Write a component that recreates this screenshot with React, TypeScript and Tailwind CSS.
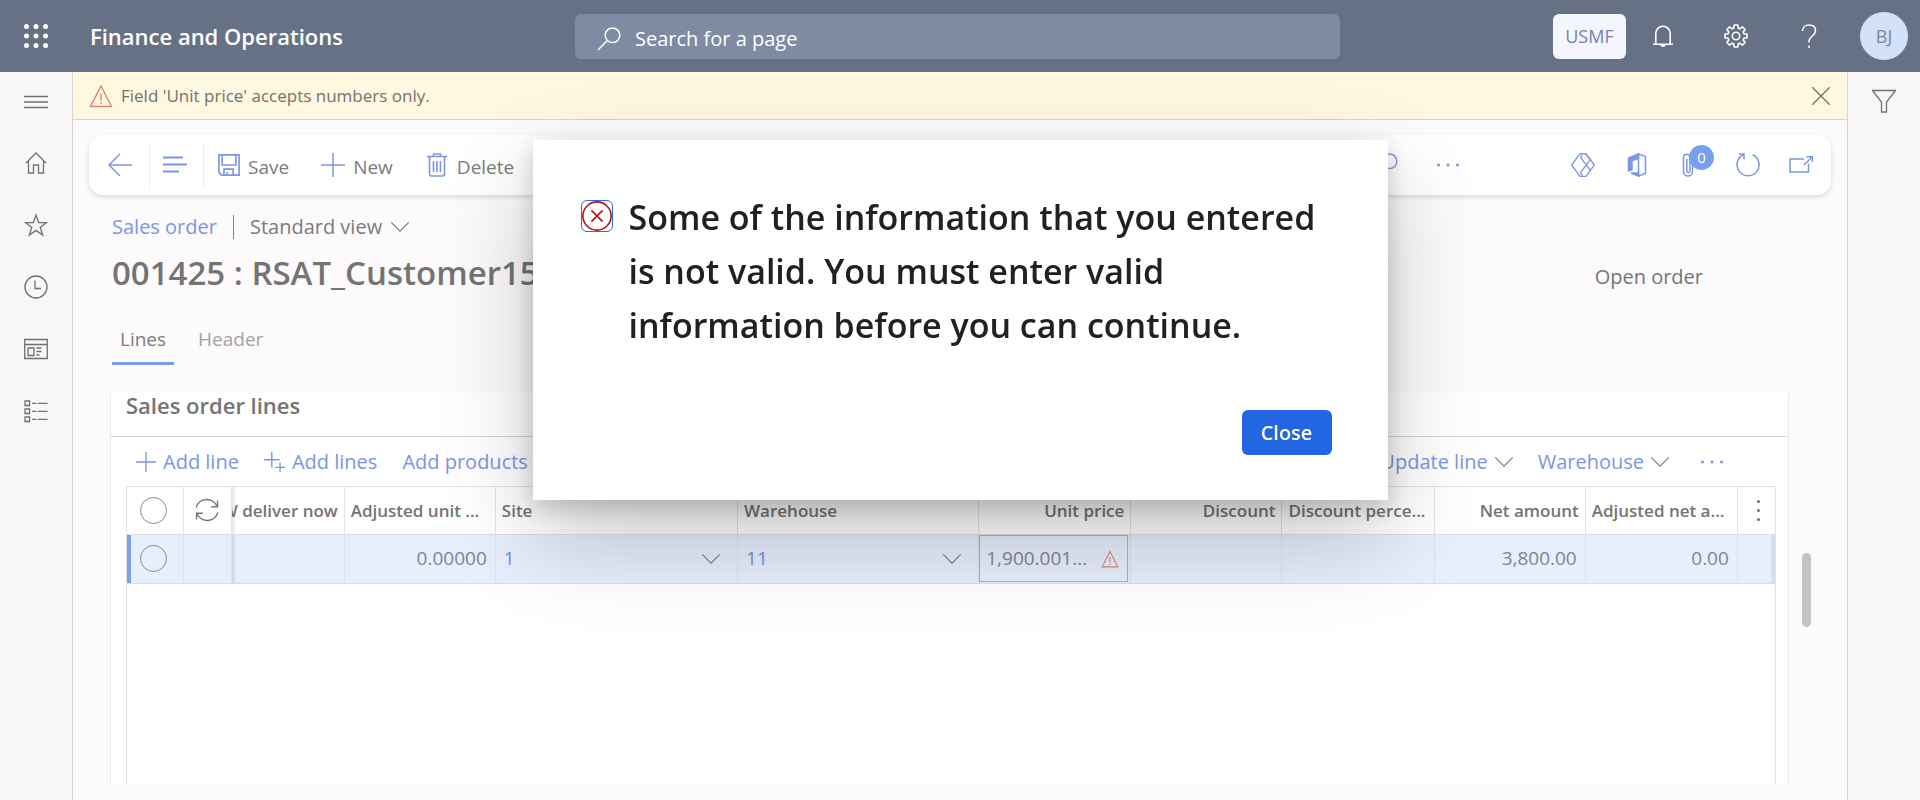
import React from "react";

type IconProps = { className?: string; size?: string; children: React.ReactNode; weight?: number };

function Icon({ className = "", size = "size-6", weight = 1.3, children }: IconProps) {
  return (
    <svg
      viewBox="0 0 24 24"
      className={`${size} shrink-0 ${className}`}
      fill="none"
      stroke="currentColor"
      strokeWidth={weight}
      aria-hidden="true"
    >
      {children}
    </svg>
  );
}

const Chevron = () => (
  <Icon size="size-5" className="text-[#7c7b7a]">
    <path d="M1.5 6.5 12 17 22.5 6.5" />
  </Icon>
);

const Warning = ({ size }: { size: string }) => (
  <Icon size={size} className="text-[#dc8570]" weight={1.4}>
    <path d="M12 2 22.5 22.5H1.5Z" />
    <path d="M12 9.5v7M12 18.3v1.7" />
  </Icon>
);

const Magnifier = () => (
  <Icon weight={1.5}>
    <circle cx="15.500" cy="8.300" r="7.300" />
    <path d="M10.200 13.500 1 23" />
  </Icon>
);

const Dots = () => (
  <Icon>
    <g fill="currentColor" stroke="none">
      <circle cx="2.500" cy="12" r="1.500" />
      <circle cx="12" cy="12" r="1.500" />
      <circle cx="21.500" cy="12" r="1.500" />
    </g>
  </Icon>
);

function Rail() {
  const items = [
    {
      label: "Home",
      art: <path d="M2 12 12 2l10 10M4.500 9.500v12.500h5v-8h5v8h5V9.500" />,
    },
    {
      label: "Favorites",
      art: <path d="m12 2 2.600 7.600h8l-6.400 4.800 2.500 7.700L12 17.400l-6.700 4.700 2.500-7.700L1.400 9.600h8Z" />,
    },
    {
      label: "Recent",
      art: (
        <>
          <circle cx="12" cy="12" r="11" />
          <path d="M11 5.500v8h6" />
        </>
      ),
    },
    {
      label: "Workspaces",
      art: <path d="M.700 2.500h22.600v19H.700ZM.700 7.500h22.600M4 11h6v7.500H4ZM12.500 11h5M12.500 14.500h5M12.500 18h3" />,
    },
    {
      label: "Modules",
      art: <path d="M1 2h4.500v4.500H1ZM1 10h4.500v4.500H1ZM1 18h4.500v4.500H1ZM8 4.300h4.500M14 4.300h9.500M8 12.300h4.500M14 12.300h9.500M8 20.300h4.500M14 20.300h9.500" />,
    },
  ];
  return (
    <nav className="flex w-[73px] shrink-0 flex-col border-r border-[#d6d4d4] bg-[#f8f6f7] text-[#727170]">
      <button aria-label="Expand navigation" className="flex h-[60px] items-center justify-center">
        <Icon>
          <path d="M0 6.500h24M0 12h24M0 17.500h24" />
        </Icon>
      </button>
      {items.map((i) => (
        <a key={i.label} href="#" aria-label={i.label} className="flex h-[62px] items-center justify-center">
          <Icon>{i.art}</Icon>
        </a>
      ))}
    </nav>
  );
}

function Header() {
  return (
    <header className="grid h-[72px] shrink-0 grid-cols-[575fr_765fr_580fr] items-center bg-[#677186] text-white">
      <div className="flex items-center">
        <button aria-label="Apps" className="flex w-[72px] justify-center">
          <svg viewBox="0 0 24 24" className="size-6" fill="currentColor" aria-hidden="true">
            {[2.5, 12, 21.5].map((y) => [2.5, 12, 21.5].map((x) => <circle key={`${x}-${y}`} cx={x} cy={y} r="2.500" />))}
          </svg>
        </button>
        <h1 className="pl-[18px] text-[22px] font-semibold">Finance and Operations</h1>
      </div>
      <label className="flex h-[45px] items-center gap-[14px] rounded-md bg-[#7e8ba3] pl-[22px] pt-1.5">
        <Magnifier />
        <input
          aria-label="Search for a page"
          placeholder="Search for a page"
          className="min-w-0 flex-1 bg-transparent text-[20px] text-white outline-none placeholder:text-white"
        />
      </label>
      <div className="flex items-center justify-end pr-3">
        <button className="h-[45px] w-[73px] rounded-md bg-[#f3f6fe] text-[18px] text-[#7384a8]">USMF</button>
        <button aria-label="Notifications" className="flex w-[73px] justify-center">
          <Icon weight={1.6}>
            <path d="M4.800 20v-10.500a7.200 7.200 0 0 1 14.400 0V20M2 20.300h20M9.800 20.500a2.300 2.300 0 0 0 4.400 0" />
          </Icon>
        </button>
        <button aria-label="Settings" className="flex w-[73px] justify-center">
          <Icon weight={1.6}>
            <circle cx="12" cy="12" r="3.700" />
            <path d="m10.200 1h3.600l.500 3.100 1.700.700 2.500-1.900 2.600 2.600-1.900 2.500.700 1.700 3.100.500v3.600l-3.100.500-.700 1.700 1.900 2.500-2.600 2.600-2.500-1.900-1.700.700-.500 3.100h-3.600l-.500-3.100-1.700-.700-2.500 1.900-2.600-2.600 1.900-2.500-.700-1.700L1 13.800v-3.600l3.100-.500.700-1.700-1.900-2.500 2.600-2.600L8 4.800l1.700-.700Z" />
          </Icon>
        </button>
        <button aria-label="Help" className="flex w-[73px] justify-center">
          <Icon weight={1.5}>
            <path d="M5.500 7c0-3.500 2.500-6 6.500-6s6.500 2.300 6.500 5.700c0 5.300-6.500 5.300-6.500 10.800v1M12 21.500v2.500" />
          </Icon>
        </button>
        <button className="ml-[15px] size-12 rounded-full bg-[#d3e1f9] text-[18px] text-[#7f8796]">BJ</button>
      </div>
    </header>
  );
}

function Toolbar() {
  return (
    <div className="mx-4 mt-[15px] flex h-[60px] items-center rounded-[14px] bg-white text-[19px] text-[#7c7b7a] shadow-[0_2px_5px_rgba(0,0,0,0.14)]">
      <button aria-label="Back" className="flex h-[46px] w-[61px] items-center justify-center border-r border-[#f0eeee] pl-0.5 text-[#7d95e4]">
        <Icon weight={1.500}>
          <path d="M24 12H1M12 1 1 12l11 11" />
        </Icon>
      </button>
      <button aria-label="Menu" className="flex h-[46px] w-[54px] items-center justify-center border-r border-[#f0eeee] pr-1 text-[#7d95e4]">
        <Icon weight={1.800}>
          <path d="M0 4.500h20M0 11.500h24M0 18.500h16" />
        </Icon>
      </button>
      <button className="flex items-center gap-2 pl-[14px]">
        <Icon size="size-[22px]" weight={1.800} className="text-[#7d95e4]">
          <path d="M1 1h22v22H4l-3-3ZM4.500 1v11h15V1M6.500 23v-6.500h10V23M10 23v-3.500" />
        </Icon>
        <span className="pt-1">Save</span>
      </button>
      <button className="flex items-center gap-2 pl-8">
        <Icon className="text-[#7d95e4]" weight={1.500}>
          <path d="M12 0v24M0 12h24" />
        </Icon>
        <span className="pt-1">New</span>
      </button>
      <button className="flex items-center gap-2 pl-8">
        <Icon className="text-[#7d95e4]" weight={1.600}>
          <path d="M2 3.500h20M8.500 3V1h7v2M4.500 3.500V21q0 2 2 2h11q2 0 2-2V3.500M8.500 8v11M12 8v11M15.500 8v11" />
        </Icon>
        <span className="pt-1">Delete</span>
      </button>
      <div className="ml-auto flex items-center text-[#7d95e4]">
        <button aria-label="Search actions" className="mr-[38px]">
          <Magnifier />
        </button>
        <button aria-label="More" className="mr-[96px]">
          <Dots />
        </button>
        <button aria-label="Power Apps" className="flex w-[53px] justify-center">
          <Icon weight={1.300}>
            <path d="M9 .700h6L23.300 12 15 23.300H9L.700 12Z" />
            <path d="M11.500 1 9.500 4.500 19.500 17.500M14.500 1 19.500 6.500 9.500 19.500 11.500 23" />
          </Icon>
        </button>
        <button aria-label="Office" className="flex w-[56px] justify-center">
          <Icon weight={1.500}>
            <path d="M13.500 1 20.500 3.500v17L13.500 23Z" />
            <path d="M13.500 1 3.500 5v13l3.500-1.200V7.500l6.500-2ZM6 20l7.500 3V20Z" fill="currentColor" />
          </Icon>
        </button>
        <button aria-label="Attachments" className="relative flex w-[56px] justify-center">
          <Icon weight={1.500} className="-translate-x-1">
            <path d="M15.500 5v13.500a4.500 4.500 0 0 1-9 0V4.500a3 3 0 0 1 6.500 0v13.500a1.500 1.500 0 0 1-3.200 0V6" />
          </Icon>
          <span className="absolute -top-2 left-6 flex size-[25px] items-center justify-center rounded-full bg-[#779fee] text-[15px] leading-none text-white">
            0
          </span>
        </button>
        <button aria-label="Refresh" className="flex w-[53px] justify-center">
          <Icon weight={1.500}>
            <path d="M16.500 1.700a11 11 0 1 1-9.500.300M3 1h5v5.500" />
          </Icon>
        </button>
        <button aria-label="Open in new window" className="mr-[3px] flex w-[54px] justify-center">
          <Icon weight={1.500}>
            <path d="M15 6H1v13h18.500v-8.500M15 12 23 4M17.500 3.700h5.800V9" />
          </Icon>
        </button>
      </div>
    </div>
  );
}

const columns = [
  { text: "Adjusted unit ...", width: "w-[151px]", align: "text-left" },
  { text: "Site", width: "w-[242px]", align: "text-left" },
  { text: "Warehouse", width: "w-[241px]", align: "text-left" },
  { text: "Unit price", width: "w-[152px]", align: "text-right" },
  { text: "Discount", width: "w-[151px]", align: "text-right" },
  { text: "Discount perce...", width: "w-[152px]", align: "text-left" },
  { text: "Net amount", width: "w-[151px]", align: "text-right" },
  { text: "Adjusted net a...", width: "w-[152px]", align: "text-left" },
];

function Lookup({ label, value }: { label: string; value: string }) {
  return (
    <div className="flex items-center pl-2 pr-4">
      <input aria-label={label} defaultValue={value} className="min-w-0 flex-1 bg-transparent text-[#7191dc] outline-none" />
      <button aria-label={`Open ${label}`}>
        <Chevron />
      </button>
    </div>
  );
}

function Grid() {
  const radio = "block size-[27px] mx-auto appearance-none rounded-full border border-[#8a8988]";
  return (
    <div className="ml-[15px] mr-3 flex flex-1 flex-col border-x border-t border-[#e2e1e1]">
      <table className="w-full table-fixed border-collapse text-[#757473]">
        <thead>
          <tr className="h-[47px] border-b border-[#dfdfe0] text-[17px]">
            <th className="w-[56px] border-r border-[#e6e5e5] p-0 pr-0.5">
              <input type="radio" name="all" aria-label="Select all rows" className={radio} />
            </th>
            <th className="w-[48px] border-r border-[#e6e5e5] p-0">
              <button aria-label="Refresh rows" className="mx-auto block">
                <Icon weight={1.400}>
                  <path d="M1.200 9.500a11 11 0 0 1 20.800-1M22.500 2.500v6.300h-6.300M22.800 14.500a11 11 0 0 1-20.800 1M1.500 21.500v-6.300h6.300" />
                </Icon>
              </button>
            </th>
            <th className="w-[113px] overflow-hidden border-r border-[#e6e5e5] p-0 font-semibold shadow-[inset_4px_0_3px_-2px_rgba(0,0,0,0.12)]">
              <span className="flex justify-end whitespace-nowrap pr-1.5">W deliver now</span>
            </th>
            {columns.map((c) => (
              <th key={c.text} className={`${c.width} ${c.align} overflow-hidden whitespace-nowrap border-r border-[#e2e2e2] px-1.5 py-0 font-semibold`}>
                {c.text}
              </th>
            ))}
            <th className="w-[37px] p-0">
              <button aria-label="Grid options" className="mx-auto flex flex-col gap-1.5 pl-1">
                <span className="size-[3px] rounded-full bg-[#6f6e6d]" />
                <span className="size-[3px] rounded-full bg-[#6f6e6d]" />
                <span className="size-[3px] rounded-full bg-[#6f6e6d]" />
              </button>
            </th>
          </tr>
        </thead>
        <tbody>
          <tr className="h-[49px] border-b border-[#d9dde6] bg-[#e7eefc] text-[19px] text-[#82858c] [&>td]:border-r [&>td]:border-[#dce2ee] [&>td]:py-0 [&>td]:pl-0">
            <td className="pr-0.5 shadow-[inset_4px_0_0_#7ca0e4]">
              <input type="radio" name="row" aria-label="Select row" className={radio} />
            </td>
            <td />
            <td className="shadow-[inset_4px_0_3px_-2px_rgba(0,0,0,0.12)]" />
            <td className="pr-2 text-right">0.00000</td>
            <td className="pr-0"><Lookup label="Site" value="1" /></td>
            <td className="pr-0"><Lookup label="Warehouse" value="11" /></td>
            <td className="pr-0">
              <div className="mr-0.5 flex h-[47px] items-center border border-[#d3a985] pl-1.5 pr-2">
                <input aria-label="Unit price" defaultValue="1,900.001..." className="min-w-0 flex-1 bg-transparent outline-none" />
                <Warning size="size-[18px]" />
              </div>
            </td>
            <td />
            <td />
            <td className="pr-2 text-right">3,800.00</td>
            <td className="pr-2 text-right">0.00</td>
            <td className="shadow-[inset_-3px_0_2px_-1px_rgba(120,150,210,0.25)]" />
          </tr>
        </tbody>
      </table>
    </div>
  );
}

function Lines() {
  return (
    <div className="flex flex-1 items-start gap-[13px] pb-4 pl-[37px] pr-9">
      <section className="flex min-w-0 flex-1 flex-col self-stretch border-x border-[#ebe9ea] bg-white">
        <h3 className="h-11 shrink-0 border-b border-[#d8d6d6] pl-[15px] text-[22px] font-semibold leading-6 text-[#757473]">Sales order lines</h3>
        <div className="flex h-[49px] shrink-0 items-center gap-[25px] px-6 text-[20px] text-[#7d95e4]">
          <button className="flex items-center gap-1.5">
            <Icon size="size-[22px]" weight={1.500}><path d="M12 1v22M1 12h22" /></Icon>
            Add line
          </button>
          <button className="flex items-center gap-1.5">
            <Icon size="size-[22px]" weight={1.500}><path d="M8.500 1v17M0 9.500h17M17.500 12.500V23M12 17.800h11" /></Icon>
            Add lines
          </button>
          <button>Add products</button>
          <div className="ml-auto mr-10 flex items-center">
            <button className="flex items-center gap-1.5">Update line <Chevron /></button>
            <button className="ml-6 flex items-center gap-1.5">Warehouse <Chevron /></button>
            <button aria-label="More line actions" className="ml-[30px]"><Dots /></button>
          </div>
        </div>
        <Grid />
      </section>
      <div className="mt-40 h-[74px] w-[9px] shrink-0 rounded-full bg-[#c5c3c4]" />
    </div>
  );
}

function ErrorDialog() {
  return (
    <div className="fixed inset-0 flex items-start justify-center pt-[140px]">
      <div
        role="alertdialog"
        aria-labelledby="dialog-text"
        className="w-[855px] bg-white pb-[45px] pl-12 pr-14 pt-[50px] shadow-[0_38px_86px_rgba(0,0,0,0.22),0_7px_22px_rgba(0,0,0,0.18)]"
      >
        <div className="flex items-start gap-4">
          <span className="mt-2.5 flex size-8 shrink-0 items-center justify-center rounded-md border border-[#2f6be0]">
            <Icon size="size-[30px]" className="text-[#b3141d]">
              <circle cx="12" cy="12" r="11.300" />
              <path d="m7.500 7.500 9 9M16.500 7.500l-9 9" />
            </Icon>
          </span>
          <p id="dialog-text" className="text-[34px] font-semibold leading-[54px] text-[#222120]">
            Some of the information that you entered
            <br />
            is not valid. You must enter valid
            <br />
            information before you can continue.
          </p>
        </div>
        <div className="mt-[58px] flex justify-end">
          <button className="h-[45px] w-[90px] rounded-md bg-[#2266e3] text-[20px] font-semibold text-white">Close</button>
        </div>
      </div>
    </div>
  );
}

export default function App() {
  return (
    <div className="flex min-h-screen flex-col bg-[#fcfafb] font-['Open_Sans','Noto_Sans',sans-serif]">
      <Header />
      <div className="flex flex-1">
        <Rail />
        <main className="flex min-w-0 flex-1 flex-col">
          <div role="alert" className="flex h-12 items-center gap-2 border-b border-[#d8d4cc] bg-[#fff8e0] pl-4 pr-4">
            <Warning size="size-6" />
            <span className="flex-1 text-[17px] text-[#73716a]">Field 'Unit price' accepts numbers only.</span>
            <button aria-label="Dismiss" className="text-[#73716a]">
              <Icon size="size-5" weight={1.600}><path d="m1.500 1.500 21 21M22.500 1.500l-21 21" /></Icon>
            </button>
          </div>
          <Toolbar />
          <div className="mt-4 flex h-8 items-center gap-4 pl-[39px] text-[20px] text-[#7c7b7a]">
            <a href="#" className="text-[#7d95e4]">Sales order</a>
            <span className="h-6 w-px bg-[#6f7fa8]" />
            <button className="flex items-center gap-2">Standard view <Chevron /></button>
          </div>
          <div className="flex h-[60px] items-center justify-between pl-[39px] pr-36 text-[#757473]">
            <h2 className="text-[33px] font-semibold">001425 : RSAT_Customer15</h2>
            <span className="pt-2 text-[20px]">Open order</span>
          </div>
          <div role="tablist" className="mb-7 mt-[14px] flex h-12 pl-[39px] text-[19px]">
            <button role="tab" aria-selected="true" className="border-b-3 border-[#779fe6] px-2 text-[#7c7b7a]">Lines</button>
            <button role="tab" aria-selected="false" className="ml-4 border-b-3 border-transparent px-2 text-[#a3a2a1]">Header</button>
          </div>
          <Lines />
        </main>
        <aside className="flex w-[73px] shrink-0 items-start justify-center border-l border-[#d6d4d4] bg-[#f8f6f7]">
          <button aria-label="Filter" className="h-[58px] text-[#727170]">
            <Icon><path d="M.500 1.500h23L14.500 13v10h-5V13Z" /></Icon>
          </button>
        </aside>
      </div>
      <ErrorDialog />
    </div>
  );
}
